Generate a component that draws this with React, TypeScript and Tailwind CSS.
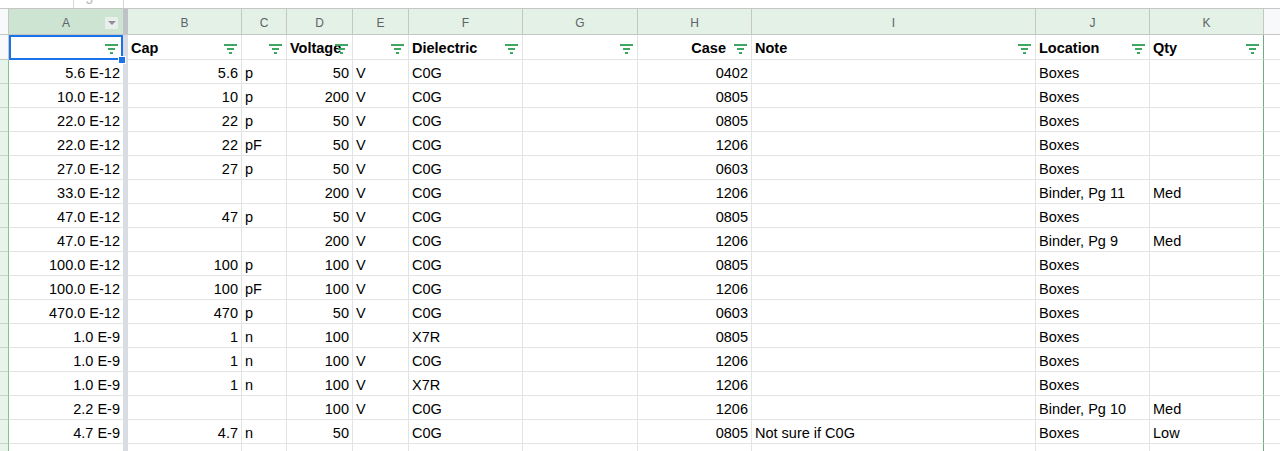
type Align = "left" | "right";

interface Col {
  id: string;
  w: string;
  align: Align;
}

// columns B..K (A is frozen and handled on its own)
const COLS: Col[] = [
  { id: "B", w: "w-[114px]", align: "right" },
  { id: "C", w: "w-[45px]", align: "left" },
  { id: "D", w: "w-[66px]", align: "right" },
  { id: "E", w: "w-[56px]", align: "left" },
  { id: "F", w: "w-[114px]", align: "left" },
  { id: "G", w: "w-[115px]", align: "left" },
  { id: "H", w: "w-[114px]", align: "right" },
  { id: "I", w: "w-[284px]", align: "left" },
  { id: "J", w: "w-[114px]", align: "left" },
  { id: "K", w: "w-[114px]", align: "left" },
];

const HEADERS = ["", "Cap", "", "Voltage", "", "Dielectric", "", "Case", "Note", "Location", "Qty"];

const ROWS: string[][] = [
  ["5.6 E-12", "5.6", "p", "50", "V", "C0G", "", "0402", "", "Boxes", ""],
  ["10.0 E-12", "10", "p", "200", "V", "C0G", "", "0805", "", "Boxes", ""],
  ["22.0 E-12", "22", "p", "50", "V", "C0G", "", "0805", "", "Boxes", ""],
  ["22.0 E-12", "22", "pF", "50", "V", "C0G", "", "1206", "", "Boxes", ""],
  ["27.0 E-12", "27", "p", "50", "V", "C0G", "", "0603", "", "Boxes", ""],
  ["33.0 E-12", "", "", "200", "V", "C0G", "", "1206", "", "Binder, Pg 11", "Med"],
  ["47.0 E-12", "47", "p", "50", "V", "C0G", "", "0805", "", "Boxes", ""],
  ["47.0 E-12", "", "", "200", "V", "C0G", "", "1206", "", "Binder, Pg 9", "Med"],
  ["100.0 E-12", "100", "p", "100", "V", "C0G", "", "0805", "", "Boxes", ""],
  ["100.0 E-12", "100", "pF", "100", "V", "C0G", "", "1206", "", "Boxes", ""],
  ["470.0 E-12", "470", "p", "50", "V", "C0G", "", "0603", "", "Boxes", ""],
  ["1.0 E-9", "1", "n", "100", "", "X7R", "", "0805", "", "Boxes", ""],
  ["1.0 E-9", "1", "n", "100", "V", "C0G", "", "1206", "", "Boxes", ""],
  ["1.0 E-9", "1", "n", "100", "V", "X7R", "", "1206", "", "Boxes", ""],
  ["2.2 E-9", "", "", "100", "V", "C0G", "", "1206", "", "Binder, Pg 10", "Med"],
  ["4.7 E-9", "4.7", "n", "50", "", "C0G", "", "0805", "Not sure if C0G", "Boxes", "Low"],
  ["", "", "", "", "", "", "", "", "", "", ""],
];

function FilterIcon() {
  return (
    <svg width="13" height="10" viewBox="0 0 13 10" className="shrink-0 self-start mt-[9px]">
      <rect x="0" y="0" width="13" height="2" fill="#40a663" />
      <rect x="3" y="4" width="7" height="2" fill="#40a663" />
      <rect x="5" y="8" width="3" height="2" fill="#40a663" />
    </svg>
  );
}

function ColumnHeaderRow() {
  return (
    <div className="flex h-[26px] border-b border-[#c4c7c5]">
      <div className="w-[9px] shrink-0 bg-[#f8f9fa] border-r border-[#c4c7c5]" />
      <div className="relative w-[114px] shrink-0 bg-[#cde4d3] flex items-center justify-center pt-[2px] text-[12px] text-[#5f6368]">
        A
        <div className="absolute left-[96px] top-[8px] w-[13px] h-[12px] bg-[#e9efeb] flex items-center justify-center">
          <div className="w-0 h-0 border-l-[4px] border-r-[4px] border-t-[4px] border-l-transparent border-r-transparent border-t-[#8d9196]" />
        </div>
      </div>
      <div className="w-[5px] shrink-0 bg-[#bfc2c6]" />
      {COLS.map((c) => (
        <div
          key={c.id}
          className={`${c.w} shrink-0 bg-[#e3f1e6] border-r border-[#c4c7c5] flex items-center justify-center pt-[2px] text-[12px] text-[#5f6368]`}
        >
          {c.id}
        </div>
      ))}
      <div className="flex-1 bg-[#f8f9fa]" />
    </div>
  );
}

function HeaderRow() {
  return (
    <div className="flex h-[25px] font-bold">
      <div className="w-[9px] shrink-0 bg-[#f8f9fa] border-r border-b border-[#c4c7c5]" />
      <div className="w-[114px] shrink-0 border-b border-[#e2e3e3] flex pl-[3px] pr-[5px]">
        <span className="flex-1" />
        <FilterIcon />
      </div>
      <div className="w-[5px] shrink-0 bg-[#dadce4]" />
      {COLS.map((c, i) => (
        <div
          key={c.id}
          className={`${c.w} shrink-0 border-b border-r border-b-[#e2e3e3] ${
            c.id === "K" ? "border-r-[#6fae80]" : "border-r-[#e2e3e3]"
          } flex pl-[3px] pr-[4px]`}
        >
          <span
            className={`flex-1 min-w-0 whitespace-nowrap self-center pt-[3px] ${
              c.id === "H" ? "text-right pr-[8px]" : "text-left"
            }`}
          >
            {HEADERS[i + 1]}
          </span>
          <FilterIcon />
        </div>
      ))}
      <div className="flex-1 border-b border-[#e2e3e3]" />
    </div>
  );
}

function DataRow({ cells }: { cells: string[] }) {
  return (
    <div className="flex h-[24px] shrink-0">
      <div className="w-[9px] shrink-0 bg-[#e6f4ea] border-r border-b border-r-[#86c196] border-b-[#c9d6cc]" />
      <div className="w-[114px] shrink-0 border-b border-[#e2e3e3] flex items-center justify-end px-[3px] pt-[3px] whitespace-nowrap">
        {cells[0]}
      </div>
      <div className="w-[5px] shrink-0 bg-[#dadce4]" />
      {COLS.map((c, i) => (
        <div
          key={c.id}
          className={`${c.w} shrink-0 border-b border-r border-b-[#e2e3e3] ${
            c.id === "K" ? "border-r-[#6fae80]" : "border-r-[#e2e3e3]"
          } flex items-center px-[3px] pt-[3px] whitespace-nowrap overflow-hidden ${
            c.align === "right" ? "justify-end" : "justify-start"
          }`}
        >
          {cells[i + 1]}
        </div>
      ))}
      <div className="flex-1 border-b border-[#e2e3e3]" />
    </div>
  );
}

export default function App() {
  return (
    <div className="relative w-[1280px] h-[451px] overflow-hidden bg-white font-['Liberation_Sans',Arial,sans-serif] text-[14.5px] text-black leading-none">
      {/* bit of the formula bar above the grid */}
      <div className="flex h-[9px] border-b border-[#c4c7c5]">
        <div className="w-[74px] shrink-0 border-r border-[#d5d7db]" />
        <div className="w-[50px] shrink-0 border-r border-[#d5d7db] overflow-hidden pl-[12px]">
          <span className="block -mt-[9px] text-[15px] text-[#bdbdbd]">J</span>
        </div>
      </div>

      <ColumnHeaderRow />
      <HeaderRow />
      {ROWS.map((r, i) => (
        <DataRow key={i} cells={r} />
      ))}

      {/* active cell */}
      <div className="absolute left-[9px] top-[35px] w-[114px] h-[25px] border-2 border-[#1a73e8]" />
      <div className="absolute left-[118px] top-[56px] w-[8px] h-[8px] bg-[#1a73e8] border border-white" />
    </div>
  );
}
